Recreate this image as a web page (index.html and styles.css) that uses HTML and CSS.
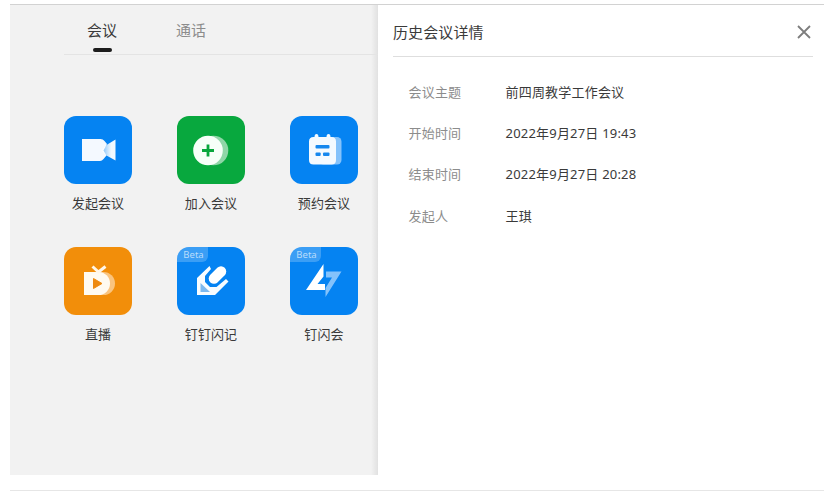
FILE: index.html
```html
<!DOCTYPE html>
<html lang="zh-CN">
<head>
    <meta charset="UTF-8">
    <meta name="viewport" content="width=device-width, initial-scale=1.0">
    <title>历史会议详情</title>
    <link rel="stylesheet" href="styles.css">
</head>
<body>
    <div class="page">
        <div class="window">
            <main class="home">
                <nav class="tabs">
                    <a class="tab active">会议</a>
                    <a class="tab">通话</a>
                </nav>
                <div class="apps">
                    <div class="app">
                        <div class="tile blue">
                            <svg viewBox="0 0 68 68">
                                <defs>
                                    <linearGradient id="cam" x1="0" x2="1">
                                        <stop offset="0" stop-color="#fff" stop-opacity="0.45"/>
                                        <stop offset="0.7" stop-color="#fff" stop-opacity="0.95"/>
                                    </linearGradient>
                                </defs>
                                <path d="M18 23h18.500q2.500 0 4 2l2.500 3-3.500 6.500 3 5-3 3.500q-1.500 2-3.500 2H18z" fill="#f4f9ff"/>
                                <path d="M37 34.500l5.500-5.500 9-5.500v21l-9-5z" fill="url(#cam)"/>
                            </svg>
                        </div>
                        <span class="name">发起会议</span>
                    </div>
                    <div class="app">
                        <div class="tile green">
                            <svg viewBox="0 0 68 68">
                                <circle cx="36.500" cy="34.500" r="14.800" fill="#8fd6a7"/>
                                <circle cx="31" cy="34.500" r="14.800" fill="#f6fff8"/>
                                <path d="M31 28.500v12M25 34.500h12" stroke="#08a63c" stroke-width="2.800"/>
                            </svg>
                        </div>
                        <span class="name">加入会议</span>
                    </div>
                    <div class="app">
                        <div class="tile blue">
                            <svg viewBox="0 0 68 68">
                                <rect x="29" y="21" width="22.500" height="27.500" rx="4.500" fill="#84c2fb"/>
                                <path d="M23.500 21h1q0-3 2-3t2 3h8q0-3 2-3t2 3h1q4.500 0 4.500 4.500v18.500q0 4.500-4.500 4.500h-18q-4.500 0-4.500-4.500v-18.500q0-4.500 4.500-4.500z" fill="#f4faff"/>
                                <rect x="25.500" y="29" width="14" height="3.400" rx="1" fill="#1688ee"/>
                                <rect x="25.500" y="36.500" width="5.200" height="3.600" rx="1" fill="#1688ee"/>
                                <rect x="33" y="36.500" width="6.500" height="3.600" rx="1" fill="#1688ee"/>
                            </svg>
                        </div>
                        <span class="name">预约会议</span>
                    </div>
                    <div class="app">
                        <div class="tile orange">
                            <svg viewBox="0 0 68 68">
                                <path d="M28 25h11.500a11.500 11.500 0 0 1 0 23H28z" fill="#fac47e"/>
                                <path d="M20 25h14.500a11.500 11.500 0 0 1 0 23H20z" fill="#fffaf0"/>
                                <path d="M28.500 19.500l6 5.500 7-5.500" fill="none" stroke="#fff6e8" stroke-width="3"/>
                                <path d="M29.500 31.500l8.500 5-8.500 5z" fill="#ee8a10" stroke="#ee8a10" stroke-linejoin="round"/>
                            </svg>
                        </div>
                        <span class="name">直播</span>
                    </div>
                    <div class="app">
                        <div class="tile blue">
                            <span class="beta">Beta</span>
                            <svg viewBox="0 0 68 68">
                                <path d="M32.500 19L20 31v17h18L51.500 34.500 49 32l-9.500 8h-6.500l-5-5v-6l6-7z" fill="#f8fcff"/>
                                <path d="M23.500 36v9h9.500z" fill="#7db9ef"/>
                                <path d="M37 31.500l7-7" stroke="#fff" stroke-width="10.500" stroke-linecap="round"/>
                            </svg>
                        </div>
                        <span class="name">钉钉闪记</span>
                    </div>
                    <div class="app">
                        <div class="tile blue">
                            <span class="beta">Beta</span>
                            <svg viewBox="0 0 68 68">
                                <path d="M36 24.500h15.500L35.500 50v-9l6.500-10.500h-6z" fill="#84c2fb"/>
                                <path d="M33.500 17v12.500l-6 7.500h7.500v6H16z" fill="#fff"/>
                            </svg>
                        </div>
                        <span class="name">钉闪会</span>
                    </div>
                </div>
            </main>
            <aside class="detail">
                <header class="detail-header">
                    <h1>历史会议详情</h1>
                    <svg class="close" viewBox="0 0 14 14">
                        <path d="M1 1l12 12M13 1L1 13" stroke="#7d7d7d" stroke-width="1.800"/>
                    </svg>
                </header>
                <dl class="info">
                    <dt>会议主题</dt>
                    <dd>前四周教学工作会议</dd>
                    <dt>开始时间</dt>
                    <dd>2022年9月27日 19:43</dd>
                    <dt>结束时间</dt>
                    <dd>2022年9月27日 20:28</dd>
                    <dt>发起人</dt>
                    <dd>王琪</dd>
                </dl>
            </aside>
        </div>
    </div>
</body>
</html>
```
FILE: styles.css
```css
* {
    box-sizing: border-box;
}
body {
    margin: 0;
    background: #fff;
    font-family: "Noto Sans", "Noto Sans CJK SC", sans-serif;
    font-size: 13px;
    color: #3a3a3a;
}
.page {
    height: 491px;
    margin: 0 9px 0 10px;
    padding-top: 4px;
    border-bottom: 1px solid #e6e6e6;
}
.window {
    display: flex;
    height: 471px;
    border-top: 1px solid #d2d2d2;
}
/* Left side */
.home {
    width: 368px;
    padding-left: 54px;
    background: linear-gradient(to right, rgba(0, 0, 0, 0) 361px, rgba(0, 0, 0, 0.07) 368px), #f2f2f2;
}
.tabs {
    display: flex;
    gap: 59px;
    height: 50px;
    padding-left: 23px;
    border-bottom: 1px solid #e4e4e4;
}
.tab {
    display: flex;
    flex-direction: column;
    align-items: center;
    padding-top: 14px;
    font-size: 15px;
    line-height: 22px;
    color: #8c8c8c;
}
.tab.active {
    color: #3a3a3a;
}
.tab.active::after {
    content: "";
    width: 19px;
    height: 4px;
    margin-top: 7px;
    border-radius: 2px;
    background: #1d1d1d;
}
.apps {
    display: grid;
    grid-template-columns: repeat(3, 68px);
    grid-auto-rows: 131px;
    column-gap: 45px;
    padding-top: 61px;
}
.app {
    display: flex;
    flex-direction: column;
    align-items: center;
}
.tile {
    position: relative;
    width: 68px;
    height: 68px;
    border-radius: 12px;
    overflow: hidden;
}
.tile svg {
    display: block;
    width: 68px;
    height: 68px;
}
.blue {
    background: #0583f2;
}
.green {
    background: #08a83e;
}
.orange {
    background: #f28e0a;
}
.beta {
    position: absolute;
    top: 0;
    left: 0;
    width: 31px;
    height: 15px;
    padding-left: 2px;
    border-bottom-right-radius: 6px;
    background: rgba(255, 255, 255, 0.22);
    font-size: 9.5px;
    line-height: 15px;
    text-align: center;
    color: #b9dcfb;
}
.name {
    margin-top: 9px;
    line-height: 20px;
    letter-spacing: 0.1px;
    white-space: nowrap;
}
/* Right side */
.detail {
    flex: 1;
    padding: 0 11px 0 15px;
    background: #fff;
}
.detail-header {
    display: flex;
    justify-content: space-between;
    align-items: center;
    height: 52px;
    padding-right: 2px;
    padding-top: 2px;
    border-bottom: 1px solid #dedede;
}
.detail-header h1 {
    margin: 0;
    font-size: 15px;
    font-weight: normal;
    line-height: 22px;
    letter-spacing: 0.1px;
}
.close {
    width: 14px;
    height: 14px;
}
.info {
    display: grid;
    grid-template-columns: 97px 1fr;
    grid-auto-rows: 41.2px;
    margin: 0;
    padding: 15px 0 0 15.5px;
    line-height: 41px;
    letter-spacing: 0.2px;
}
.info dt {
    color: #8c8c8c;
}
.info dd {
    margin: 0;
    white-space: nowrap;
}
```
